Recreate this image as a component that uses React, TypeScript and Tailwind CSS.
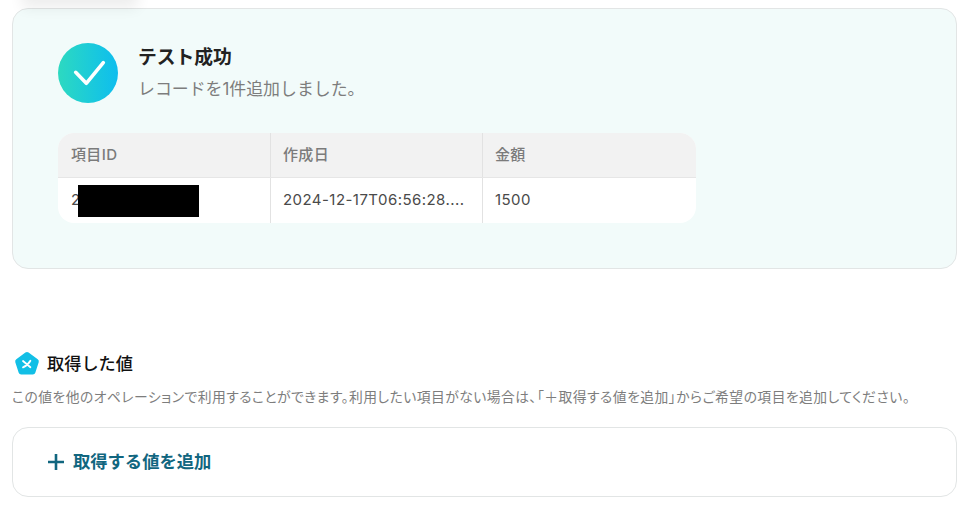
const FONT = "font-['Inter','Noto_Sans_CJK_JP',sans-serif]";

const SuccessIcon = () => (
  <div className="h-[60px] w-[60px] shrink-0 rounded-full bg-gradient-to-r from-[#2dd9c0] to-[#0fbdee]">
    <svg width="60" height="60" viewBox="0 0 60 60" fill="none">
      <path d="M17.7 29.3 L28.3 40.3 L45.3 19.7" stroke="#fff" strokeWidth="3.6" strokeLinecap="round" strokeLinejoin="round" />
    </svg>
  </div>
);

const PentagonIcon = () => (
  <svg width="26" height="26" viewBox="0 0 26 26" className="shrink-0">
    <path d="M11.4 1.6a2.6 2.6 0 0 1 3.2 0l9.1 6.7a2.6 2.6 0 0 1 1 2.9l-3.4 10.6a2.6 2.6 0 0 1-2.5 1.8H7.2a2.6 2.6 0 0 1-2.5-1.8L1.3 11.2a2.6 2.6 0 0 1 1-2.9z" fill="#12bfe6" />
    <path d="M9 10l7.4 6.2M16.4 9.8c-1.2 2.2-3.4 4.8-7.4 6.6" stroke="#fff" strokeWidth="1.8" strokeLinecap="round" fill="none" />
  </svg>
);

export default function App() {
  return (
    <div className={`relative h-[523px] w-[966px] overflow-hidden bg-white pl-3 pr-[9px] pt-2 ${FONT}`}>
      <div className="absolute -top-6 left-[30px] h-6 w-[100px] shadow-[0_0_14px_8px_rgba(0,0,0,0.07)]" />

      <section className="h-[261px] rounded-2xl border border-[#e2e5e5] bg-[#f2fbfa] pl-[45px] pt-[34px]">
        <div className="flex gap-5">
          <SuccessIcon />
          <div className="pt-0.5">
            <h2 className="text-[18.8px] leading-[26px] font-semibold text-[#222]">テスト成功</h2>
            <p className="mt-[6px] text-[16.9px] leading-6 text-[#7d7d7d]">レコードを1件追加しました。</p>
          </div>
        </div>

        <div className="mt-[30px] w-[638px] overflow-hidden rounded-2xl bg-white text-[15px]">
          <div className="grid h-[45px] grid-cols-[213px_212px_1fr] border-b border-[#e6e6e6] bg-[#f2f2f2] font-medium tracking-[0.35px] text-[#7b7b7b]">
            <div className="flex items-center border-r border-[#e2e2e2] pl-[13px]">項目ID</div>
            <div className="flex items-center border-r border-[#e2e2e2] pl-[12px]">作成日</div>
            <div className="flex items-center pl-[12px]">金額</div>
          </div>
          <div className="grid h-[45px] grid-cols-[213px_212px_1fr] tracking-[0.45px] text-[#4a4a4a]">
            <div className="relative flex items-center border-r border-[#e2e2e2] pl-[13px]">
              2
              <div className="absolute left-5 top-[7px] h-8 w-[121px] bg-black" />
            </div>
            <div className="flex items-center border-r border-[#e2e2e2] pl-[12px]">2024-12-17T06:56:28....</div>
            <div className="flex items-center pl-[12px]">1500</div>
          </div>
        </div>
      </section>

      <div className="mt-[82px] flex items-center gap-[7px] pl-[2px]">
        <PentagonIcon />
        <h3 className="text-[17.2px] leading-6 font-medium text-[#111]">取得した値</h3>
      </div>
      <p className="mt-[11px] text-[13.8px] leading-[18px] tracking-[0.47px] text-[#7d7d7d] [font-feature-settings:'palt']">
        この値を他のオペレーションで利用することができます。利用したい項目がない場合は、「＋取得する値を追加」からご希望の項目を追加してください。
      </p>

      <button className="mt-[21px] flex h-[70px] w-full items-center gap-[9px] rounded-2xl border border-[#e2e5e5] bg-white pl-[35px] text-[17.3px] font-semibold text-[#11667f]">
        <svg width="16" height="16" viewBox="0 0 16 16" fill="none">
          <path d="M8 0v16M0 8h16" stroke="#11667f" strokeWidth="2.6" />
        </svg>
        取得する値を追加
      </button>
    </div>
  );
}
